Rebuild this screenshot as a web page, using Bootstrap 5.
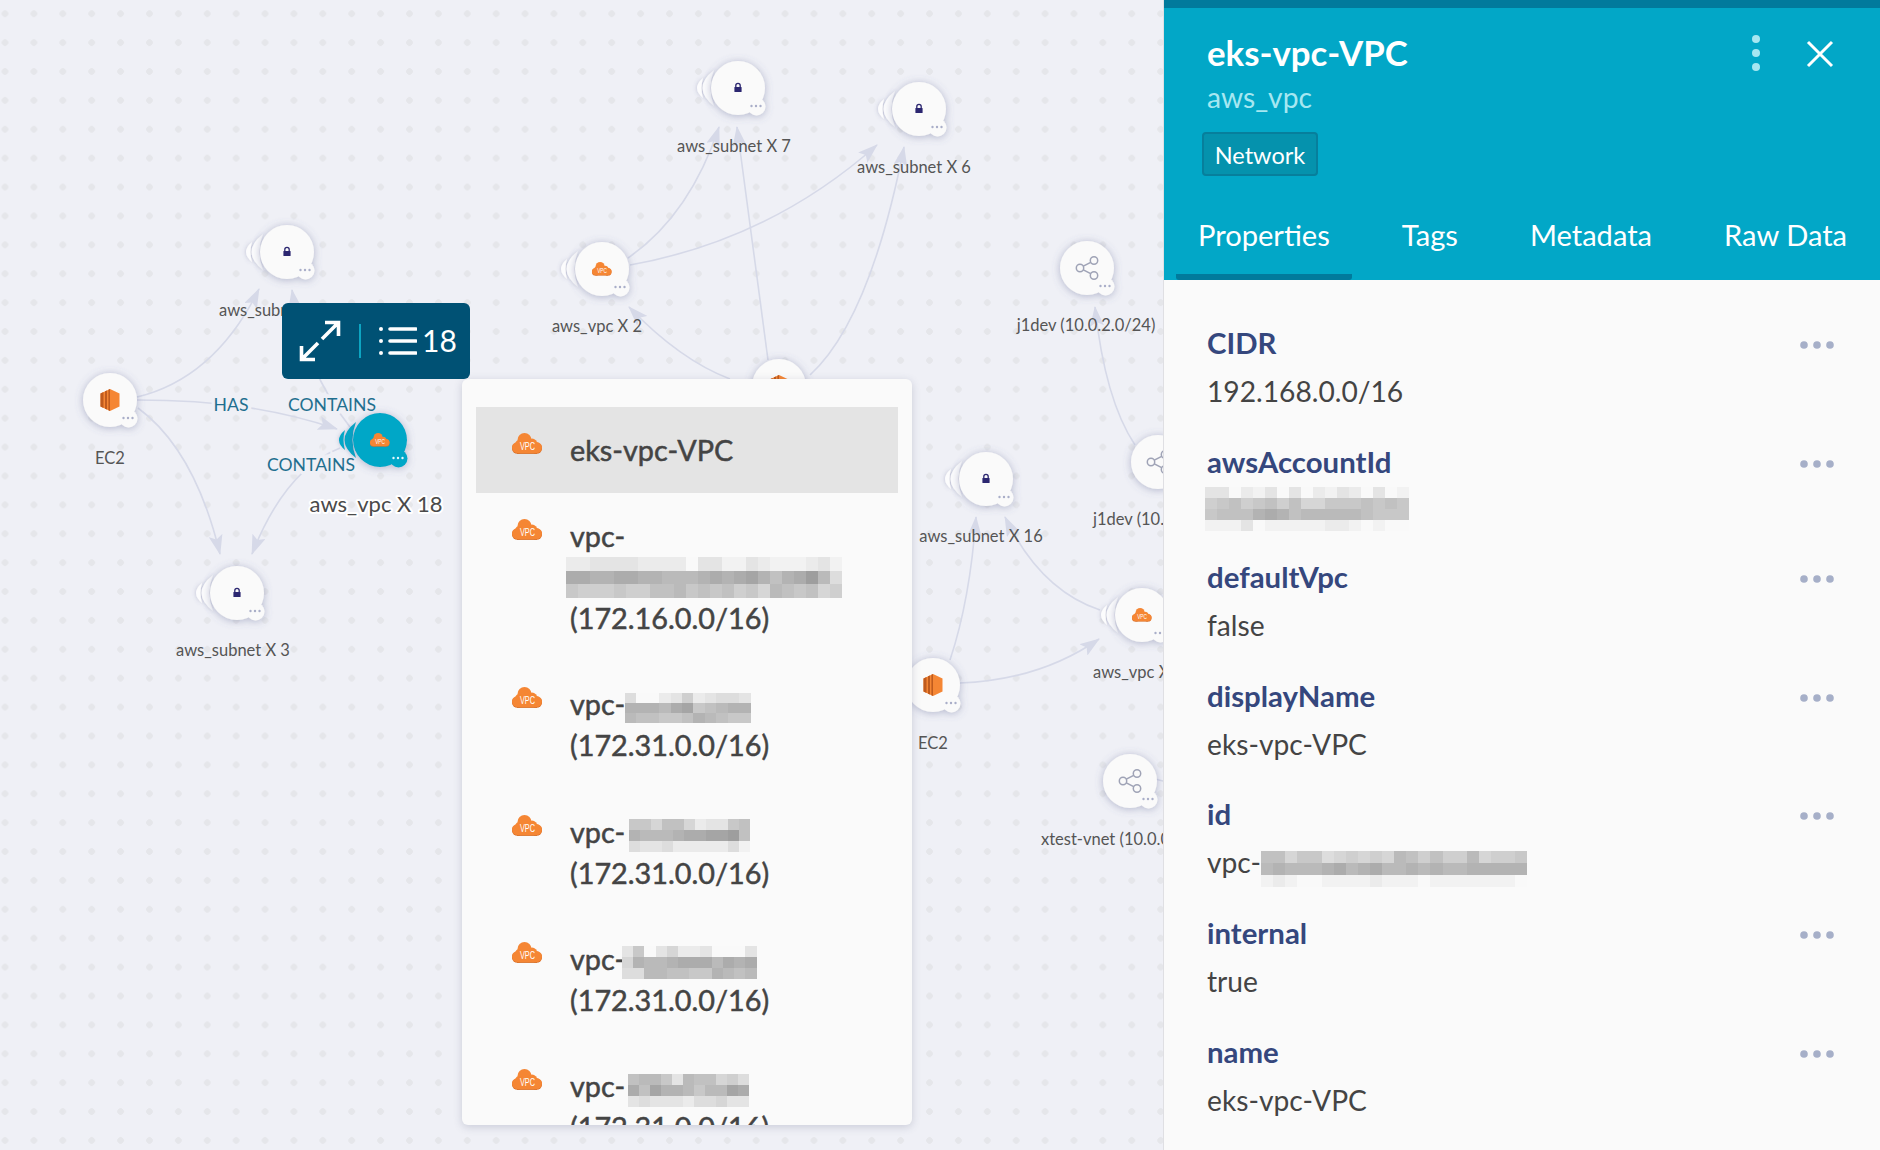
<!DOCTYPE html>
<html lang="en">
<head>
<meta charset="utf-8">
<title>eks-vpc-VPC</title>
<link href="https://cdn.jsdelivr.net/npm/bootstrap@5.3.0/dist/css/bootstrap.min.css" rel="stylesheet">
<style>
html,body{height:100%;margin:0}
body{font-family:"Lato","Liberation Sans",sans-serif;background:#eff0f6;color:#444;overflow:hidden}
.stage{height:1150px;width:1880px}
.graph{position:relative;flex:0 0 1163px;height:100%;overflow:hidden;background-color:#eff0f6;background-image:radial-gradient(circle,#e5e6ea 3px,transparent 3.6px);background-size:28.9px 28.9px;background-position:-9.45px -.75px}
.graph>svg{display:block}
.nlabel{font-family:"Lato","Liberation Sans",sans-serif;font-size:16.5px;fill:#555;text-anchor:middle}
.nlabel-start{text-anchor:start}
.nlabel-big{font-size:22px;fill:#4a4a4a;paint-order:stroke;stroke:#fff;stroke-width:4px;stroke-linejoin:round}
.elabel{font-family:"Lato","Liberation Sans",sans-serif;font-size:17.6px;fill:#1f6f8f;text-anchor:middle;paint-order:stroke;stroke:#eff0f6;stroke-width:7px}
.edge{fill:none;stroke:#d6d9e8;stroke-width:1.6}
.toolbox{position:absolute;left:282px;top:303px;width:188px;height:76px;background:#005174;border-radius:6px;color:#fff;font-size:30px;padding-left:17px}
.toolbox-sep{width:2px;height:34px;background:#0da4c2;margin:0 18px}
.toolbox-count{margin:-2px 0 0 5px;line-height:1}
.popup{position:absolute;left:462px;top:379px;width:450px;height:746px;background:#fafafa;border-radius:6px;box-shadow:0 2px 8px rgba(70,75,110,.22);overflow:hidden;padding:28px 14px 0}
.vpc-item{display:flex;gap:28px;padding:23px 20px 22.4px 36px;background:transparent;border:0;border-radius:0;font-size:28.8px;line-height:41px;color:#444;-webkit-text-stroke:.5px #444}
.vpc-item.is-current{background:#e4e4e4}
.vpc-cloud{flex:0 0 30px;margin-top:3px}
.vpc-text{min-width:0}
.pix{display:block;shape-rendering:crispEdges}
.pix-inline{display:inline-block;vertical-align:middle}
.pix-wide{margin-left:-4px}
.pix-in4{margin-left:4px}
.pix-out3{margin-left:-3px}
.pix-in3{margin-left:3px}
.pix-low{margin-top:5px}
.info{flex:1 1 auto;min-width:0;height:100%;background:#fafafa;border-left:1px solid #dfdfe3;overflow:hidden}
.info-head{height:280px;background:#02a7c7;border-top:8px solid #017a9c;padding:22px 46px 0 43px;color:#fff}
.info-title{font-size:34.8px;font-weight:700;line-height:46px;margin:0}
.info-sub{font-size:28.2px;line-height:44px;margin-top:-1px;color:#a6e7f1}
.info-tag{display:inline-block;margin:13px 0 0 -5px;height:44px;width:116px;text-align:center;line-height:42px;font-size:23.5px;background:#0592ad;border:2px solid #077f9c;border-radius:4px;color:#fff}
.info-acts{gap:45px}
.info-close{margin-top:2px}
.info-tabs{margin:15px 0 0 -31px;gap:28px;flex-wrap:nowrap;width:720px}
.info-tabs .nav-link{padding:20px 22px 15px;font-size:29.1px;line-height:48px;color:#fff;border-bottom:6px solid transparent;border-radius:3px}
.info-tabs .nav-link.is-on{border-bottom-color:#017a9c}
.info-body{padding:39px 46px 0 43px}
.prop{margin-bottom:22.6px}
.prop-key{font-size:29.4px;font-weight:700;line-height:48px;color:#35477d}
.prop-val{font-size:28.2px;line-height:47px;margin-top:1px;color:#444}
.prop-pix{margin:1px 0 0 -2px}
.prop-more{margin-top:22px;flex:none}
</style>
</head>
<body>
<div class="stage d-flex">
  <div class="graph">
    <svg width="1163" height="1150" viewBox="0 0 1163 1150">
      <defs>
        <marker id="tip" markerWidth="20" markerHeight="14" refX="19" refY="7" orient="auto" markerUnits="userSpaceOnUse"><path d="M0 0 L20 7 L0 14 L4 7Z" fill="#d6d9e8"/></marker>
        <filter id="glow" x="-40%" y="-40%" width="180%" height="180%"><feDropShadow dx="0" dy="1" stdDeviation="4" flood-color="#5a6190" flood-opacity=".42"/></filter>
        <filter id="glow-soft" x="-40%" y="-40%" width="180%" height="180%"><feDropShadow dx="0" dy="0" stdDeviation="2" flood-color="#5a6190" flood-opacity=".35"/></filter>
        <g id="dots3"><circle cx="13.5" cy="18" r="1.2"/><circle cx="18" cy="18" r="1.2"/><circle cx="22.5" cy="18" r="1.2"/></g>
        <g id="disc"><circle r="27"/><circle cx="18.5" cy="18.5" r="9"/></g>
        <g id="rings">
          <path d="M-24 -18 Q-47 0 -24 18 Q-31 0 -24 -18Z"/>
          <path d="M-35 -10 Q-47 0 -35 10 Q-38 0 -35 -10Z"/>
        </g>
        <g id="plain"><g filter="url(#glow)" fill="#fafafa"><use href="#disc"/></g><use href="#dots3" fill="#a9aec8"/></g>
        <g id="stack"><g filter="url(#glow-soft)" fill="#fcfcfd"><use href="#rings"/></g><g filter="url(#glow)" fill="#fafafa"><use href="#disc"/></g><use href="#dots3" fill="#a9aec8"/></g>
        <g id="stack-on"><g filter="url(#glow-soft)" fill="#02a7c7"><use href="#rings"/></g><g filter="url(#glow)" fill="#02a7c7"><use href="#disc"/></g><use href="#dots3" fill="#e6f7fb"/></g>
        <g id="lock"><path d="M-2.2 -1 V-2.4 A2.2 2.2 0 0 1 2.2 -2.4 V-1" fill="none" stroke="#2b2670" stroke-width="1.3"/><rect x="-3.6" y="-1" width="7.2" height="5" rx=".6" fill="#2b2670"/></g>
        <g id="vpc-mark">
          <g fill="#d9702a"><circle cx="5.5" cy="15.2" r="5.6"/><circle cx="24.5" cy="15.2" r="5.6"/><rect x="5" y="12" width="20" height="8.9"/></g>
          <g fill="#f58634"><circle cx="5.5" cy="14.6" r="5.5"/><circle cx="24.5" cy="14.6" r="5.5"/><circle cx="12.5" cy="7" r="7"/><circle cx="20" cy="11" r="5.4"/><circle cx="7.5" cy="11" r="4"/><rect x="5" y="10" width="20" height="10.1"/></g>
          <text x="15.5" y="17.3" font-size="11" font-family="Liberation Sans" fill="#fff" text-anchor="middle" textLength="15" lengthAdjust="spacingAndGlyphs">VPC</text>
        </g>
        <g id="cloud"><g transform="translate(-10 -7) scale(.65)"><use href="#vpc-mark"/></g></g>
        <g id="ec2"><path d="M-9.5 -6.5 L0 -11 L9.5 -6.5 V6.5 L0 11 L-9.5 6.5Z" fill="#f58634"/><path d="M-9.5 -6.5 L-6.5 -8 V8 L-9.5 6.5Z M-5 -8.7 L-3 -9.6 V9.6 L-5 8.7Z M-1.6 -10.2 L0 -11 V11 L-1.6 10.2Z" fill="#bf5b1e"/></g>
        <g id="share" fill="none" stroke="#9fa3b6" stroke-width="1.5"><circle cx="7" cy="-7.5" r="3.7"/><circle cx="-7" cy="0" r="3.7"/><circle cx="7" cy="7.5" r="3.7"/><path d="M-3.7 -1.8 L3.7 -5.7 M-3.7 1.8 L3.7 5.7"/></g>
      </defs>

      <g>
        <path class="edge" marker-end="url(#tip)" d="M137 397 Q215 378 259 289"/>
        <path class="edge" marker-end="url(#tip)" d="M137 400 C220 400 280 410 337 429"/>
        <path class="edge" marker-end="url(#tip)" d="M138 408 Q195 450 220 554"/>
        <path class="edge" marker-end="url(#tip)" d="M340 448 Q285 470 252 554"/>
        <path class="edge" marker-end="url(#tip)" d="M350 427 Q305 370 292 290"/>
        <path class="edge" marker-end="url(#tip)" d="M628 258 Q690 215 719 127"/>
        <path class="edge" marker-end="url(#tip)" d="M630 265 Q770 240 877 145"/>
        <path class="edge" marker-end="url(#tip)" d="M730 379 Q680 360 629 307"/>
        <path class="edge" marker-end="url(#tip)" d="M768 360 Q755 260 737 127"/>
        <path class="edge" marker-end="url(#tip)" d="M810 375 Q870 320 904 147"/>
        <path class="edge" marker-end="url(#tip)" d="M950 660 Q970 600 976 517"/>
        <path class="edge" marker-end="url(#tip)" d="M1100 610 Q1040 590 1005 517"/>
        <path class="edge" marker-end="url(#tip)" d="M960 683 Q1040 680 1099 639"/>
        <path class="edge" marker-end="url(#tip)" d="M1135 445 Q1105 400 1095 307"/>
        <path class="edge" d="M1155 779 L1163 781"/>
      </g>

      <text class="elabel" x="231" y="411">HAS</text>
      <text class="elabel" x="332" y="411">CONTAINS</text>
      <text class="elabel" x="311" y="471">CONTAINS</text>

      <g transform="translate(110 400)"><use href="#plain"/><use href="#ec2"/></g>
      <g transform="translate(287 252)"><use href="#stack"/><use href="#lock"/></g>
      <g transform="translate(380 440)"><use href="#stack-on"/><use href="#cloud"/></g>
      <g transform="translate(237 593)"><use href="#stack"/><use href="#lock"/></g>
      <g transform="translate(738 88)"><use href="#stack"/><use href="#lock"/></g>
      <g transform="translate(919 109)"><use href="#stack"/><use href="#lock"/></g>
      <g transform="translate(602 269)"><use href="#stack"/><use href="#cloud"/></g>
      <g transform="translate(779 386)"><use href="#plain"/><use href="#ec2"/></g>
      <g transform="translate(1087 268)"><use href="#plain"/><use href="#share"/></g>
      <g transform="translate(986 479)"><use href="#stack"/><use href="#lock"/></g>
      <g transform="translate(1158 462)"><use href="#plain"/><use href="#share"/></g>
      <g transform="translate(1142 615)"><use href="#stack"/><use href="#cloud"/></g>
      <g transform="translate(933 685)"><use href="#plain"/><use href="#ec2"/></g>
      <g transform="translate(1130 781)"><use href="#plain"/><use href="#share"/></g>

      <text class="nlabel" x="110" y="464">EC2</text>
      <text class="nlabel nlabel-start" x="219" y="316">aws_subnet X 9</text>
      <text class="nlabel" x="233" y="656">aws_subnet X 3</text>
      <text class="nlabel" x="734" y="152">aws_subnet X 7</text>
      <text class="nlabel" x="914" y="173">aws_subnet X 6</text>
      <text class="nlabel" x="597" y="332">aws_vpc X 2</text>
      <text class="nlabel" x="1086" y="331">j1dev (10.0.2.0/24)</text>
      <text class="nlabel" x="981" y="542">aws_subnet X 16</text>
      <text class="nlabel nlabel-start" x="1093" y="525">j1dev (10.0.1.0/24)</text>
      <text class="nlabel nlabel-start" x="1093" y="678">aws_vpc X 2</text>
      <text class="nlabel" x="933" y="749">EC2</text>
      <text class="nlabel nlabel-start" x="1041" y="845">xtest-vnet (10.0.0.0/16)</text>
      <text class="nlabel nlabel-big" x="376" y="512">aws_vpc X 18</text>
    </svg>

    <div class="toolbox d-flex align-items-center">
      <svg width="42" height="42" viewBox="0 0 42 42" fill="none" stroke="#fff" stroke-width="3.6"><path d="M23 19 L39 3 M26 2.5 H39.5 V16 M19 23 L3 39 M2.5 26 V39.5 H16"/></svg>
      <span class="toolbox-sep"></span>
      <svg width="38" height="30" viewBox="0 0 38 30"><g fill="#fff"><circle cx="2" cy="3" r="2"/><circle cx="2" cy="15" r="2"/><circle cx="2" cy="27" r="2"/></g><g stroke="#fff" stroke-width="3.6" stroke-linecap="round"><path d="M11 3 H37 M11 15 H37 M11 27 H37"/></g></svg>
      <span class="toolbox-count">18</span>
    </div>

    <div class="popup">
      <div class="list-group list-group-flush">
        <div class="list-group-item vpc-item is-current">
          <svg class="vpc-cloud" width="30" height="21" viewBox="0 0 30 21"><use href="#vpc-mark"/></svg>
          <div class="vpc-text">eks-vpc-VPC</div>
        </div>
        <div class="list-group-item vpc-item">
          <svg class="vpc-cloud" width="30" height="21" viewBox="0 0 30 21"><use href="#vpc-mark"/></svg>
          <div class="vpc-text">vpc-
            <svg class="pix pix-wide" data-w="12" data-h="13.5" data-rows="ddccccddddfcceecdeeedce|4455445566654543575426b|8999899776878798a6787a9"></svg>
            (172.16.0.0/16)</div>
        </div>
        <div class="list-group-item vpc-item">
          <svg class="vpc-cloud" width="30" height="21" viewBox="0 0 30 21"><use href="#vpc-mark"/></svg>
          <div class="vpc-text">vpc-<svg class="pix pix-inline" data-w="11.4" data-h="10" data-rows="bffdc9dcbbc|55564387655|67788756788"></svg><br>(172.31.0.0/16)</div>
        </div>
        <div class="list-group-item vpc-item">
          <svg class="vpc-cloud" width="30" height="21" viewBox="0 0 30 21"><use href="#vpc-mark"/></svg>
          <div class="vpc-text">vpc-<svg class="pix pix-inline pix-in4" data-w="11" data-h="11" data-rows="88a77adcc87|56665443327|bccbdddddbe"></svg><br>(172.31.0.0/16)</div>
        </div>
        <div class="list-group-item vpc-item">
          <svg class="vpc-cloud" width="30" height="21" viewBox="0 0 30 21"><use href="#vpc-mark"/></svg>
          <div class="vpc-text">vpc-<svg class="pix pix-inline pix-out3" data-w="11.2" data-h="11" data-rows="c8fcaddcfffc|a56654446454|bb6677885676"></svg><br>(172.31.0.0/16)</div>
        </div>
        <div class="list-group-item vpc-item">
          <svg class="vpc-cloud" width="30" height="21" viewBox="0 0 30 21"><use href="#vpc-mark"/></svg>
          <div class="vpc-text">vpc-<svg class="pix pix-inline pix-in3" data-w="11" data-h="11" data-rows="7668c677a9b|47355686634|cbcccdbbacc"></svg><br>(172.31.0.0/16)</div>
        </div>
      </div>
    </div>
  </div>

  <div class="info d-flex flex-column">
    <div class="info-head">
      <div class="d-flex justify-content-between align-items-center">
        <h1 class="info-title">eks-vpc-VPC</h1>
        <div class="info-acts d-flex align-items-center">
          <svg width="10" height="38" viewBox="0 0 10 38" fill="#a6e7f1"><circle cx="5" cy="5" r="4"/><circle cx="5" cy="19" r="4"/><circle cx="5" cy="33" r="4"/></svg>
          <svg class="info-close" width="28" height="28" viewBox="0 0 28 28" fill="none" stroke="#fff" stroke-width="3"><path d="M2 2 L26 26 M26 2 L2 26"/></svg>
        </div>
      </div>
      <div class="info-sub">aws_vpc</div>
      <span class="info-tag">Network</span>
      <ul class="nav info-tabs">
        <li class="nav-item"><a class="nav-link is-on" href="#">Properties</a></li>
        <li class="nav-item"><a class="nav-link" href="#">Tags</a></li>
        <li class="nav-item"><a class="nav-link" href="#">Metadata</a></li>
        <li class="nav-item"><a class="nav-link" href="#">Raw Data</a></li>
      </ul>
    </div>
    <div class="info-body">
      <div class="prop d-flex justify-content-between">
        <div><div class="prop-key">CIDR</div><div class="prop-val">192.168.0.0/16</div></div>
        <svg class="prop-more" width="34" height="8" viewBox="0 0 34 8" fill="#a6afc8"><circle cx="4" cy="4" r="3.8"/><circle cx="17" cy="4" r="3.8"/><circle cx="30" cy="4" r="3.8"/></svg>
      </div>
      <div class="prop d-flex justify-content-between">
        <div><div class="prop-key">awsAccountId</div><div class="prop-val"><svg class="pix prop-pix" data-w="12" data-h="11" data-rows="ccfdecfcfdecdfcfe|98798797aa8887878|87775457666667888|eeecfeeeeeddefeff"></svg></div></div>
        <svg class="prop-more" width="34" height="8" viewBox="0 0 34 8" fill="#a6afc8"><circle cx="4" cy="4" r="3.8"/><circle cx="17" cy="4" r="3.8"/><circle cx="30" cy="4" r="3.8"/></svg>
      </div>
      <div class="prop d-flex justify-content-between">
        <div><div class="prop-key">defaultVpc</div><div class="prop-val">false</div></div>
        <svg class="prop-more" width="34" height="8" viewBox="0 0 34 8" fill="#a6afc8"><circle cx="4" cy="4" r="3.8"/><circle cx="17" cy="4" r="3.8"/><circle cx="30" cy="4" r="3.8"/></svg>
      </div>
      <div class="prop d-flex justify-content-between">
        <div><div class="prop-key">displayName</div><div class="prop-val">eks-vpc-VPC</div></div>
        <svg class="prop-more" width="34" height="8" viewBox="0 0 34 8" fill="#a6afc8"><circle cx="4" cy="4" r="3.8"/><circle cx="17" cy="4" r="3.8"/><circle cx="30" cy="4" r="3.8"/></svg>
      </div>
      <div class="prop d-flex justify-content-between">
        <div><div class="prop-key">id</div><div class="prop-val">vpc-<svg class="pix pix-inline pix-low" data-w="12.1" data-h="12" data-rows="77a88ba9a9a6797996a998|6566654654665656655555|edeffeeeedeeefeeeeeeef"></svg></div></div>
        <svg class="prop-more" width="34" height="8" viewBox="0 0 34 8" fill="#a6afc8"><circle cx="4" cy="4" r="3.8"/><circle cx="17" cy="4" r="3.8"/><circle cx="30" cy="4" r="3.8"/></svg>
      </div>
      <div class="prop d-flex justify-content-between">
        <div><div class="prop-key">internal</div><div class="prop-val">true</div></div>
        <svg class="prop-more" width="34" height="8" viewBox="0 0 34 8" fill="#a6afc8"><circle cx="4" cy="4" r="3.8"/><circle cx="17" cy="4" r="3.8"/><circle cx="30" cy="4" r="3.8"/></svg>
      </div>
      <div class="prop d-flex justify-content-between">
        <div><div class="prop-key">name</div><div class="prop-val">eks-vpc-VPC</div></div>
        <svg class="prop-more" width="34" height="8" viewBox="0 0 34 8" fill="#a6afc8"><circle cx="4" cy="4" r="3.8"/><circle cx="17" cy="4" r="3.8"/><circle cx="30" cy="4" r="3.8"/></svg>
      </div>
    </div>
  </div>
</div>
<script>
document.querySelectorAll('svg.pix').forEach(function(s){
  var w=+s.dataset.w,h=+s.dataset.h,rows=s.dataset.rows.split('|'),cols=0,ns='http://www.w3.org/2000/svg';
  rows.forEach(function(r,y){
    if(r.length>cols)cols=r.length;
    r.split('').forEach(function(c,x){
      var d=parseInt(c,16);if(isNaN(d))d=9;
      var g=144+d*7,e=document.createElementNS(ns,'rect');
      e.setAttribute('x',x*w);e.setAttribute('y',y*h);e.setAttribute('width',w+.5);e.setAttribute('height',h+.5);
      e.setAttribute('fill','rgb('+g+','+g+','+g+')');s.appendChild(e);
    });
  });
  s.setAttribute('width',cols*w);s.setAttribute('height',rows.length*h);
});
</script>
<script src="https://cdn.jsdelivr.net/npm/bootstrap@5.3.0/dist/js/bootstrap.bundle.min.js"></script>
</body>
</html>
